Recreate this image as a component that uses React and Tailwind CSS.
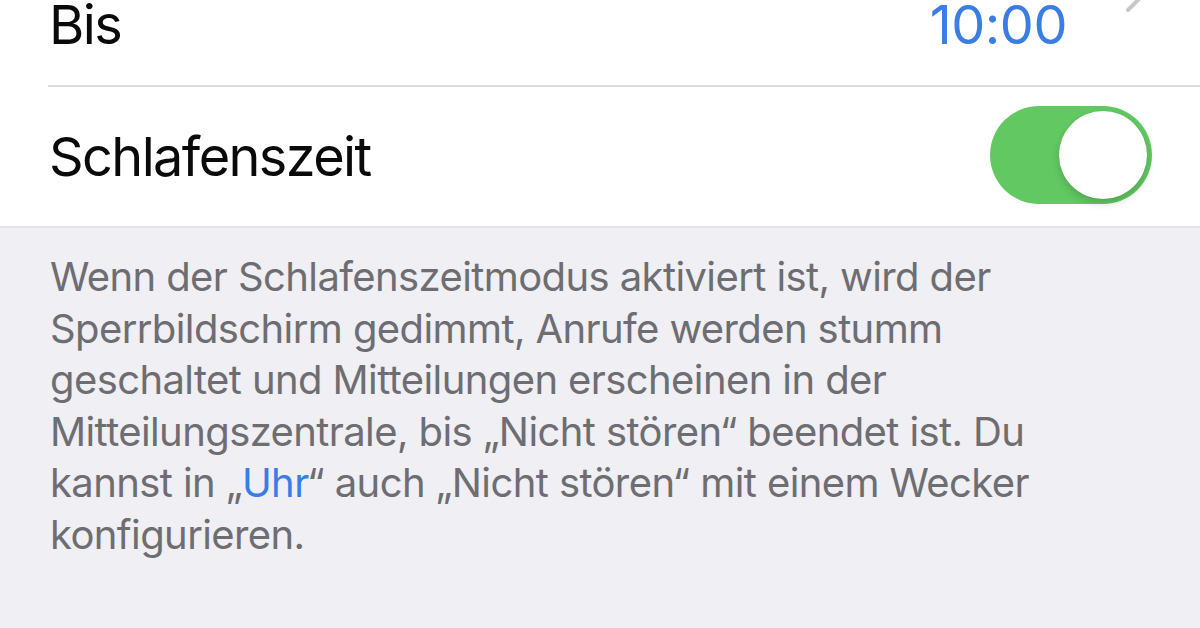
export default function App() {
  const lines = [
    "Wenn der Schlafenszeitmodus aktiviert ist, wird der",
    "Sperrbildschirm gedimmt, Anrufe werden stumm",
    "geschaltet und Mitteilungen erscheinen in der",
    "Mitteilungszentrale, bis „Nicht stören“ beendet ist. Du",
  ];
  return (
    <div className="w-[1200px] h-[628px] overflow-hidden bg-[#efeff4] flex flex-col" style={{ fontFamily: "Inter, 'Noto Sans', sans-serif" }}>
      <div className="bg-white flex flex-col">
        <div className="h-[85px] flex items-start pl-[49px] pr-[133px] pt-[3px] relative">
          <span className="text-[54px] leading-[44px] tracking-[-1.6px] text-[#0a0a0a]">Bis</span>
          <span className="ml-auto text-[54px] leading-[44px] tracking-[-0.5px] text-[#3a7ee4]">10:00</span>
          <svg className="absolute right-[52px] top-[-26px]" width="24" height="40" viewBox="0 0 24 40">
            <path d="M4 4 L20 20 L4 36" fill="none" stroke="#c7c7cc" strokeWidth="4" strokeLinecap="round" strokeLinejoin="round" />
          </svg>
        </div>
        <div className="ml-[48px] h-[2px] bg-[#dcdcdf]"></div>
        <div className="h-[139px] flex items-center pl-[49px] pr-[48px]">
          <span className="text-[54px] leading-none tracking-[-1.6px] text-[#0a0a0a]">Schlafenszeit</span>
          <div className="ml-auto w-[162px] h-[98px] rounded-full bg-[#62c962] flex items-center justify-end pr-[5px] mb-[4px]">
            <div className="w-[88px] h-[88px] rounded-full bg-white shadow-[0_4px_8px_rgba(0,0,0,0.18),0_0_1px_rgba(0,0,0,0.1)]"></div>
          </div>
        </div>
      </div>
      <div className="h-[2px] bg-[#e3e3e8]"></div>
      <div className="pl-[50px] pt-[23px] text-[40px] leading-[51.5px] tracking-[-0.6px] text-[#6d6d72]">
        {lines.map((l, i) => (
          <div key={i} className="whitespace-nowrap">{l}</div>
        ))}
        <div className="whitespace-nowrap">
          kannst in „<span className="text-[#3a7ee4]">Uhr</span>“ auch „Nicht stören“ mit einem Wecker
        </div>
        <div className="whitespace-nowrap">konfigurieren.</div>
      </div>
    </div>
  );
}
